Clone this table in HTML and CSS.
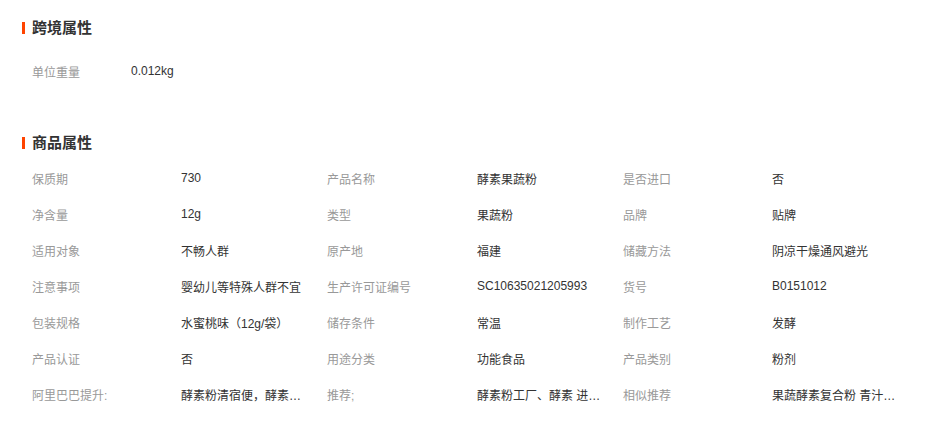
FILE: index.html
```html
<!DOCTYPE html>
<html lang="zh-CN">
<head>
<meta charset="utf-8">
<title>属性</title>
<link rel="stylesheet" href="styles.css">
</head>
<body>
<section class="sec sec-first">
  <h2 class="title">跨境属性</h2>
  <div class="simple-row">
    <span class="label short">单位重量</span>
    <span class="value">0.012kg</span>
  </div>
</section>
<section class="sec sec-second">
  <h2 class="title">商品属性</h2>
  <div class="grid">
    <span class="label">保质期</span><span class="value">730</span>
    <span class="label">产品名称</span><span class="value">酵素果蔬粉</span>
    <span class="label">是否进口</span><span class="value">否</span>

    <span class="label">净含量</span><span class="value">12g</span>
    <span class="label">类型</span><span class="value">果蔬粉</span>
    <span class="label">品牌</span><span class="value">贴牌</span>

    <span class="label">适用对象</span><span class="value">不畅人群</span>
    <span class="label">原产地</span><span class="value">福建</span>
    <span class="label">储藏方法</span><span class="value">阴凉干燥通风避光</span>

    <span class="label">注意事项</span><span class="value">婴幼儿等特殊人群不宜</span>
    <span class="label">生产许可证编号</span><span class="value">SC10635021205993</span>
    <span class="label">货号</span><span class="value">B0151012</span>

    <span class="label">包装规格</span><span class="value">水蜜桃味（12g/袋）</span>
    <span class="label">储存条件</span><span class="value">常温</span>
    <span class="label">制作工艺</span><span class="value">发酵</span>

    <span class="label">产品认证</span><span class="value">否</span>
    <span class="label">用途分类</span><span class="value">功能食品</span>
    <span class="label">产品类别</span><span class="value">粉剂</span>

    <span class="label">阿里巴巴提升:</span><span class="value">酵素粉清宿便，酵素果蔬粉</span>
    <span class="label">推荐;</span><span class="value">酵素粉工厂、酵素 进口酵素</span>
    <span class="label">相似推荐</span><span class="value">果蔬酵素复合粉 青汁酵素粉</span>
  </div>
</section>
</body>
</html>
```
FILE: styles.css
```css
html, body {
  margin: 0;
  padding: 0;
  background: #fff;
}
body {
  font-family: "Liberation Sans", "Noto Sans CJK SC", sans-serif;
  font-size: 12px;
  color: #333;
}
.sec {
  padding-left: 22px;
}
.sec-first {
  padding-top: 18px;
}
.sec-second {
  padding-top: 44px;
}
.title {
  margin: 0;
  height: 20px;
  line-height: 20px;
  font-size: 15px;
  font-weight: bold;
  color: #333;
  display: flex;
  align-items: center;
  gap: 7px;
}
.title::before {
  content: "";
  width: 3px;
  height: 12px;
  background: #ff4400;
}
.simple-row {
  margin-top: 15px;
  padding-left: 10px;
  height: 36px;
  display: flex;
  align-items: center;
}
.label {
  color: #999;
  white-space: nowrap;
}
.label.short {
  width: 99px;
}
.value {
  color: #333;
  white-space: nowrap;
  overflow: hidden;
  text-overflow: ellipsis;
  max-width: 124px;
}
.grid {
  margin-top: 7px;
  padding-left: 10px;
  display: grid;
  grid-template-columns: 149px 146px 150px 146px 149px 146px;
  grid-auto-rows: 36px;
  align-items: center;
}
```
